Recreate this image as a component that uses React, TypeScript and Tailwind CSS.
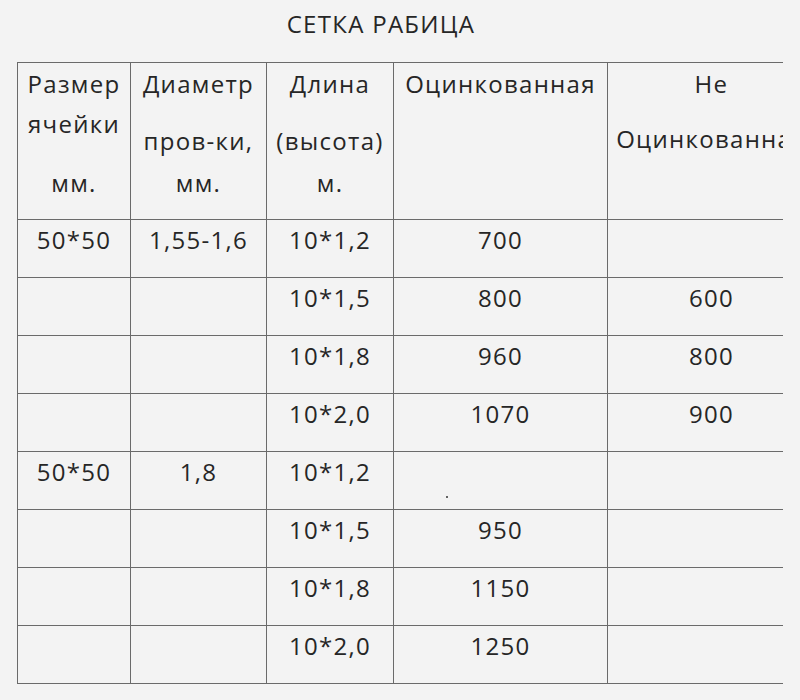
const rows: string[][] = [
  ["50*50", "1,55-1,6", "10*1,2", "700", ""],
  ["", "", "10*1,5", "800", "600"],
  ["", "", "10*1,8", "960", "800"],
  ["", "", "10*2,0", "1070", "900"],
  ["50*50", "1,8", "10*1,2", "", ""],
  ["", "", "10*1,5", "950", ""],
  ["", "", "10*1,8", "1150", ""],
  ["", "", "10*2,0", "1250", ""],
];

const cell = "border-r border-b border-[#6a6a6a] text-center";

export default function App() {
  return (
    <div
      className="h-[700px] w-[800px] overflow-hidden bg-[#f3f3f3] text-[24px] font-medium leading-6 tracking-[1.3px] text-[#262626]"
      style={{ fontFamily: '"Open Sans", "Noto Sans", sans-serif' }}
    >
      <h1 className="pt-[12px] pr-[38px] text-center">СЕТКА РАБИЦА</h1>

      <div className="ml-[17px] mt-[26px] w-[766px] overflow-hidden border-l border-t border-[#6a6a6a]">
        <div className="grid w-[818px] grid-cols-[113px_136px_127px_214px_228px]">
          {/* header: each word sits on its own line, as in the scanned sheet */}
          <div className={`${cell} h-[157px] pt-[9px]`}>
            <div>Размер</div>
            <div className="mt-4">ячейки</div>
            <div className="mt-[35px]">мм.</div>
          </div>
          <div className={`${cell} h-[157px] pt-[9px]`}>
            <div>Диаметр</div>
            <div className="mt-[33px]">пров-ки,</div>
            <div className="mt-[18px]">мм.</div>
          </div>
          <div className={`${cell} h-[157px] pt-[9px]`}>
            <div>Длина</div>
            <div className="mt-[33px]">(высота)</div>
            <div className="mt-[18px]">м.</div>
          </div>
          <div className={`${cell} h-[157px] pt-[9px]`}>
            <div>Оцинкованная</div>
          </div>
          <div className={`${cell} h-[157px] pt-[9px] pr-[20px]`}>
            <div>Не</div>
            <div className="mt-[31px] whitespace-nowrap">Оцинкованная</div>
          </div>

          {rows.map((row, r) =>
            row.map((value, c) => (
              <div
                key={`${r}-${c}`}
                className={`${cell} relative h-[58px] pt-[8px] ${c === 4 ? "pr-[20px]" : ""}`}
              >
                {value}
                {r === 4 && c === 3 && (
                  <span className="absolute left-[52px] top-[44px] h-[2px] w-[2px] rounded-full bg-[#333]" />
                )}
              </div>
            )),
          )}
        </div>
      </div>
    </div>
  );
}
